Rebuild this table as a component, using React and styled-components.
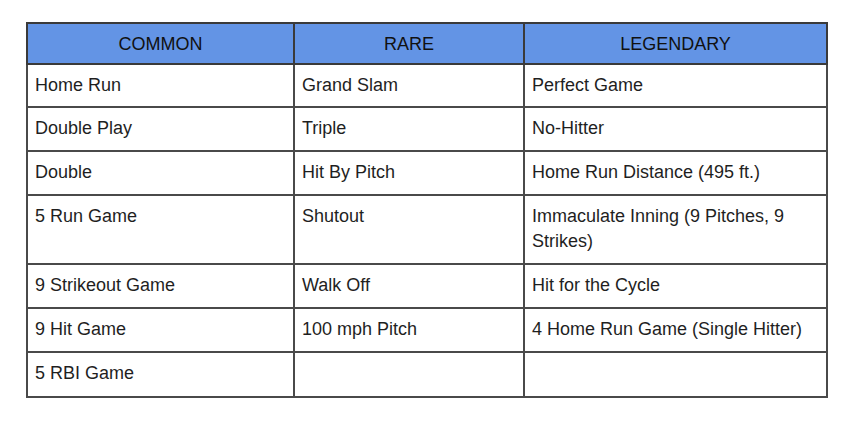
import React from "react";
import styled, { createGlobalStyle } from "styled-components";

const Global = createGlobalStyle`
  html, body { margin: 0; padding: 0; background: #fff; }
  body { font-family: "Liberation Sans", Arial, sans-serif; }
`;

const Page = styled.div`
  padding: 22px 0 0 26px;
`;

const Table = styled.table`
  border-collapse: collapse;
  table-layout: fixed;
  width: 800px;
  font-size: 18px;
  line-height: 24px;
  color: #1f1f1f;
`;

const Col = styled.col`
  width: ${(p) => p.$w}px;
`;

const HeadCell = styled.th`
  background: #6394e5;
  border: 2px solid #3a3a3a;
  height: 39px;
  padding: 0 7px;
  font-weight: normal;
  text-align: center;
  color: #111;
`;

const Cell = styled.td`
  border: 2px solid #4a4a4a;
  padding: 8px 7px ${(p) => p.$pb}px;
  vertical-align: top;
  text-align: left;
  line-height: ${(p) => (p.$wrap ? 24.5 : 24)}px;
`;

const rows = [
  ["Home Run", "Grand Slam", "Perfect Game"],
  ["Double Play", "Triple", "No-Hitter"],
  ["Double", "Hit By Pitch", "Home Run Distance (495 ft.)"],
  ["5 Run Game", "Shutout", "Immaculate Inning (9 Pitches, 9 Strikes)"],
  ["9 Strikeout Game", "Walk Off", "Hit for the Cycle"],
  ["9 Hit Game", "100 mph Pitch", "4 Home Run Game (Single Hitter)"],
  ["5 RBI Game", "", ""],
];

export default function App() {
  return (
    <>
      <Global />
      <Page>
        <Table>
          <colgroup>
            <Col $w={267} />
            <Col $w={230} />
            <Col $w={303} />
          </colgroup>
          <thead>
            <tr>
              <HeadCell>COMMON</HeadCell>
              <HeadCell>RARE</HeadCell>
              <HeadCell>LEGENDARY</HeadCell>
            </tr>
          </thead>
          <tbody>
            {rows.map((r, i) => (
              <tr key={i}>
                {r.map((c, j) => (
                  <Cell
                    key={j}
                    $wrap={i === 3}
                    $pb={i === 0 ? 9 : i === rows.length - 1 ? 11 : 10}
                  >
                    {c}
                  </Cell>
                ))}
              </tr>
            ))}
          </tbody>
        </Table>
      </Page>
    </>
  );
}
